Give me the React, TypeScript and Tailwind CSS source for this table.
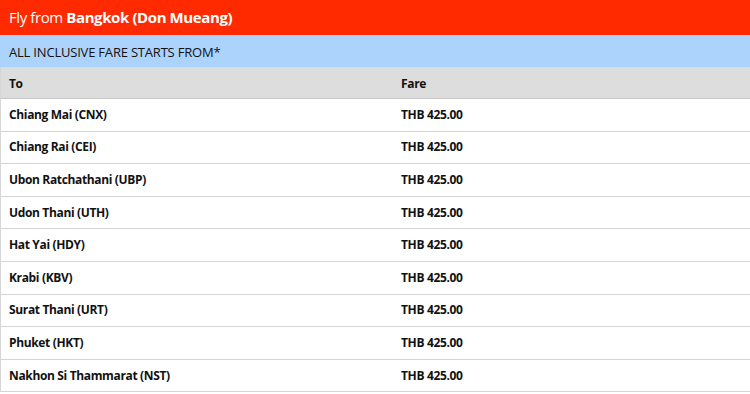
import React from "react";

const rows = [
  "Chiang Mai (CNX)",
  "Chiang Rai (CEI)",
  "Ubon Ratchathani (UBP)",
  "Udon Thani (UTH)",
  "Hat Yai (HDY)",
  "Krabi (KBV)",
  "Surat Thani (URT)",
  "Phuket (HKT)",
  "Nakhon Si Thammarat (NST)",
];

export default function App() {
  return (
    <div className="w-[750px] h-[394px] bg-white overflow-hidden" style={{ fontFamily: '"Open Sans", "Noto Sans", sans-serif' }}>
      <div className="h-[35px] bg-[#ff2a00] text-white flex items-center pl-[9px] text-[15px] tracking-[-0.4px]">
        <span>Fly from&nbsp;</span>
        <span className="font-bold">Bangkok (Don Mueang)</span>
      </div>
      <div className="h-[32px] bg-[#acd3fb] text-[#111] flex items-center pl-[9px] pt-[3px] text-[13px] tracking-[-0.2px]">
        ALL INCLUSIVE FARE STARTS FROM*
      </div>
      <div className="border-l border-[#d6d6d6]">
        <div className="h-[32px] bg-[#dddddd] border-b border-[#c8c8c8] flex items-center pt-[3px] text-[12px] font-bold text-[#111] tracking-[-0.35px]">
          <div className="w-[391px] pl-[8px]">To</div>
          <div className="pl-[9px]">Fare</div>
        </div>
        {rows.map((r) => (
          <div key={r} className="h-[32.6px] border-b border-[#d4d4d4] flex items-center text-[12px] font-bold text-[#111] tracking-[-0.35px]">
            <div className="w-[391px] pl-[8px]">{r}</div>
            <div className="pl-[9px]">THB 425.00</div>
          </div>
        ))}
      </div>
    </div>
  );
}
